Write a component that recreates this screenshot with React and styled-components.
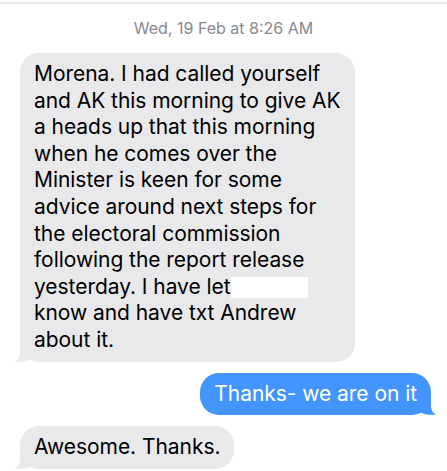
import React from 'react';
import styled, { createGlobalStyle } from 'styled-components';

const GlobalStyle = createGlobalStyle`
    html, body {
        margin: 0;
        padding: 0;
        background: #ffffff;
    }
    body {
        font-family: Inter, "Noto Sans", "Liberation Sans", sans-serif;
        -webkit-font-smoothing: antialiased;
    }
`;

const Screen = styled.div`
    width: 447px;
    height: 471px;
    overflow: hidden;
    display: flex;
    flex-direction: column;
    padding-top: 2px;
    box-sizing: border-box;
`;

const TopRule = styled.div`
    height: 2px;
    background: #e8e8ea;
`;

const Stamp = styled.div`
    text-align: center;
    font-size: 16px;
    line-height: 19px;
    color: #88888d;
    padding: 15px 0 15px;
`;

const Thread = styled.div`
    display: flex;
    flex-direction: column;
    gap: 11px;
    padding: 0 16px 0 20px;
`;

const Row = styled.div`
    display: flex;
    justify-content: ${props => (props.mine ? 'flex-end' : 'flex-start')};
`;

const Bubble = styled.div`
    position: relative;
    max-width: 340px;
    box-sizing: border-box;
    padding: 8px 14px 8px 14px;
    border-radius: 19px;
    background: ${props => (props.mine ? '#4394fc' : '#e9e9eb')};
    color: ${props => (props.mine ? '#ffffff' : '#000000')};
    font-size: 21px;
    line-height: 26.6px;
    letter-spacing: -0.05px;
    white-space: pre-line;
`;

const Tail = styled.svg`
    position: absolute;
    bottom: 0;
    width: 17px;
    height: 18px;
    ${props => (props.mine
        ? 'right: -6px; transform: scaleX(-1);'
        : 'left: -6px;')}
`;

const Redacted = styled.span`
    display: inline-block;
    width: 77px;
    height: 21px;
    background: #ffffff;
    vertical-align: -4px;
`;

function BubbleTail({ mine }) {
    const fill = mine ? '#4394fc' : '#e9e9eb';
    return (
        <Tail mine={mine} viewBox="0 0 17 18">
            <path
                d="M6 0 H17 V15 C13 17.5 7 18.3 0.5 17.6 C4.5 16 6 12.5 6 8 Z"
                fill={fill}
            />
        </Tail>
    );
}

const longMessage = `Morena. I had called yourself
and AK this morning to give AK
a heads up that this morning
when he comes over the
Minister is keen for some
advice around next steps for
the electoral commission
following the report release
yesterday. I have let`;

const longTail = `know and have txt Andrew
about it.`;

export default function App() {
    return (
        <Screen>
            <GlobalStyle />
            <TopRule />
            <Stamp>Wed, 19 Feb at 8:26 AM</Stamp>
            <Thread>
                <Row>
                    <Bubble>
                        {longMessage}<Redacted />{'\n'}{longTail}
                        <BubbleTail />
                    </Bubble>
                </Row>
                <Row mine>
                    <Bubble mine>
                        Thanks- we are on it
                        <BubbleTail mine />
                    </Bubble>
                </Row>
                <Row>
                    <Bubble>
                        Awesome. Thanks.
                        <BubbleTail />
                    </Bubble>
                </Row>
            </Thread>
        </Screen>
    );
}
